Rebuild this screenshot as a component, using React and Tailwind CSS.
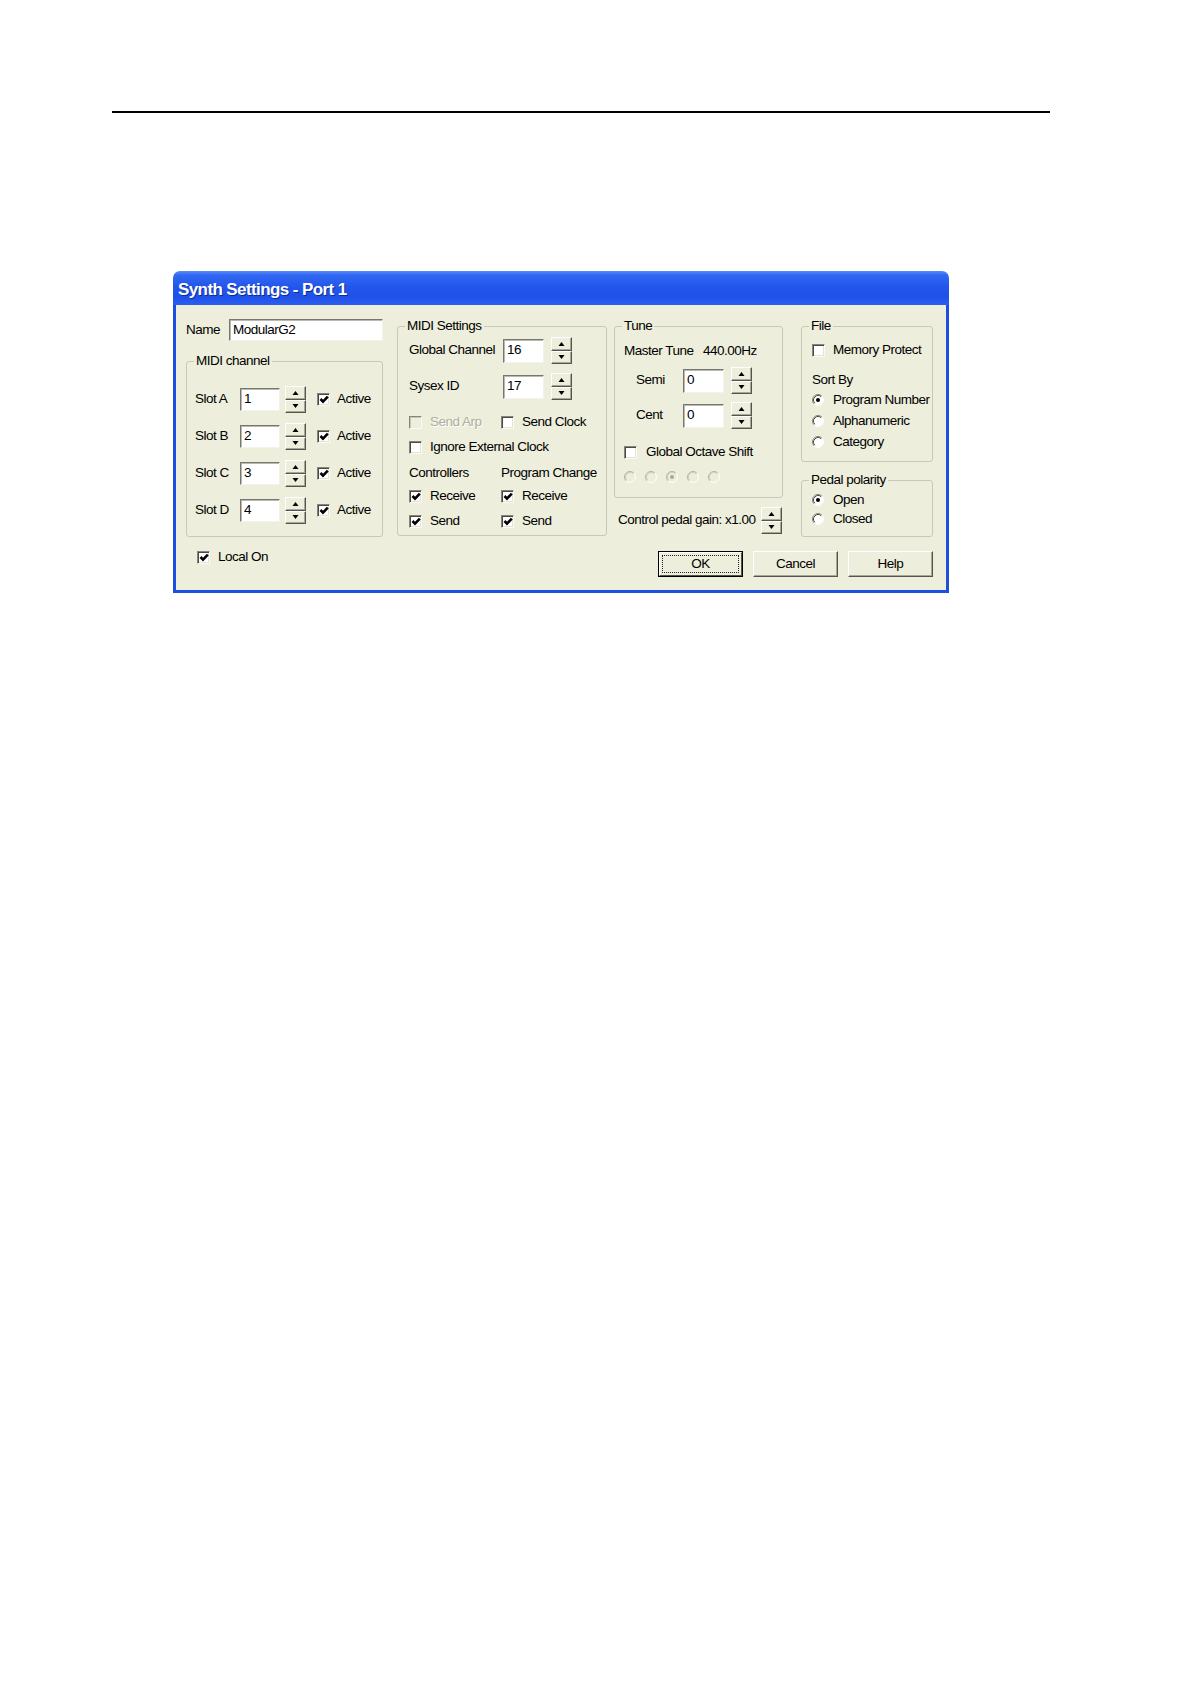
import React from "react";

const FONT = "font-['Liberation_Sans',Arial,sans-serif]";

function Check({ checked = false, disabled = false }) {
  return (
    <span
      className={`relative block w-[13px] h-[13px] shrink-0 border border-t-[#85857b] border-l-[#85857b] border-b-[#fbfbf5] border-r-[#fbfbf5] ${
        disabled
          ? "bg-[#edeedb] shadow-[inset_1px_1px_0_#c9c8b6]"
          : "bg-white shadow-[inset_1px_1px_0_#4a4a44,inset_-1px_-1px_0_#e4e3d4]"
      }`}
    >
      {checked && (
        <svg className="absolute left-[1px] top-[1px]" width="10" height="10" viewBox="0 0 10 10">
          <path d="M1.5 4 L4 6.6 L8.8 1.6" stroke="#000" strokeWidth="2.6" fill="none" />
        </svg>
      )}
    </span>
  );
}

function Radio({ checked = false, disabled = false }) {
  const fill = disabled ? "#edeedb" : "#ffffff";
  return (
    <svg width="12" height="12" viewBox="0 0 12 12" className="block shrink-0">
      <circle cx="6" cy="6" r="5" fill={fill} />
      <path d="M9.89 2.11 A5.5 5.5 0 0 0 2.11 9.89" stroke={disabled ? "#b4b3a3" : "#85857b"} fill="none" />
      <path d="M9.18 2.82 A4.5 4.5 0 0 0 2.82 9.18" stroke={disabled ? "#cfcebe" : "#4a4a44"} fill="none" />
      <path d="M9.89 2.11 A5.5 5.5 0 0 1 2.11 9.89" stroke="#ffffff" fill="none" />
      {checked && <circle cx="6" cy="6" r="2" fill={disabled ? "#a8a797" : "#000"} />}
    </svg>
  );
}

function Arrow({ up }) {
  return (
    <svg width="7" height="4" viewBox="0 0 7 4" className="block">
      <path d={up ? "M3.5 0 L6.5 4 L0.5 4 Z" : "M0.5 0 L6.5 0 L3.5 4 Z"} fill="#000" />
    </svg>
  );
}

function SpinHalf({ up }) {
  return (
    <div className="flex-1 flex items-center justify-center bg-[#edeedb] border border-t-[#ffffff] border-l-[#ffffff] border-b-[#55554d] border-r-[#55554d] shadow-[inset_-1px_-1px_0_#a9a898]">
      <Arrow up={up} />
    </div>
  );
}

function Spin() {
  return (
    <div className="flex flex-col w-[21px] h-[27px] shrink-0">
      <SpinHalf up />
      <SpinHalf />
    </div>
  );
}

function Field({ value, w, h }) {
  return (
    <div
      className={`${w} ${h} shrink-0 bg-white border border-t-[#77776f] border-l-[#77776f] border-b-[#f3f3ea] border-r-[#f3f3ea] shadow-[inset_1px_1px_0_#b9b9ae] pl-[3px] flex items-center`}
    >
      {value}
    </div>
  );
}

function Group({ legend, className, bodyClass, children }) {
  return (
    <fieldset className={`min-w-0 border border-[#c9c9b8] rounded-[3px] ${className}`}>
      <legend className="ml-[7px] px-[2px] leading-[16px] h-[16px] whitespace-nowrap">{legend}</legend>
      <div className={`flex flex-col ${bodyClass}`}>{children}</div>
    </fieldset>
  );
}

function CheckRow({ label, checked, disabled, className = "" }) {
  return (
    <div className={`h-[18px] flex items-center ${className}`}>
      <Check checked={checked} disabled={disabled} />
      <span
        className={`ml-[8px] whitespace-nowrap ${
          disabled ? "text-[#aeae9e] [text-shadow:1px_1px_0_#ffffff]" : ""
        }`}
      >
        {label}
      </span>
    </div>
  );
}

function RadioRow({ label, checked, className = "" }) {
  return (
    <div className={`h-[18px] flex items-center ${className}`}>
      <Radio checked={checked} />
      <span className="ml-[9px] whitespace-nowrap">{label}</span>
    </div>
  );
}

function SlotRow({ slot, value }) {
  return (
    <div className="h-[27px] flex items-center">
      <span className="w-[45px] whitespace-nowrap">{slot}</span>
      <Field value={value} w="w-[40px]" h="h-[23px]" />
      <div className="ml-[5px]">
        <Spin />
      </div>
      <div className="ml-[11px] flex items-center">
        <Check checked />
        <span className="ml-[7px]">Active</span>
      </div>
    </div>
  );
}

function SpinField({ label, value, labelW }) {
  return (
    <div className="h-[27px] flex items-center">
      <span className={`${labelW} whitespace-nowrap`}>{label}</span>
      <Field value={value} w="w-[41px]" h="h-[24px]" />
      <div className="ml-[7px]">
        <Spin />
      </div>
    </div>
  );
}

function Btn({ children, def = false }) {
  if (def) {
    return (
      <div className="w-[85px] h-[26px] border border-black bg-[#edeedb]">
        <div className="w-full h-full border border-t-white border-l-white border-b-[#55554d] border-r-[#55554d] p-[2px]">
          <div className="w-full h-full border border-dotted border-[#222] flex items-center justify-center">
            {children}
          </div>
        </div>
      </div>
    );
  }
  return (
    <div className="w-[85px] h-[26px] bg-[#edeedb] border border-t-white border-l-white border-b-[#55554d] border-r-[#55554d] shadow-[inset_-1px_-1px_0_#a9a898] flex items-center justify-center">
      {children}
    </div>
  );
}

export default function App() {
  return (
    <div className={`w-[1190px] min-h-[1684px] bg-white pt-[111px] ${FONT} text-[13.5px] tracking-[-0.5px] text-black`}>
      <div className="ml-[112px] w-[938px] h-[2px] bg-black" />
      <div className="ml-[173px] mt-[158px] w-[776px]">
        {/* Title bar */}
        <div className="h-[34px] rounded-t-[7px] bg-[linear-gradient(180deg,#5a8cf8_0%,#3168f2_12%,#2356ec_45%,#1f50e8_75%,#2a5ef0_100%)] pl-[5px] pt-[3px] flex items-center">
          <span className="font-bold text-[17px] tracking-[-0.6px] text-white [text-shadow:1px_1px_0_#0a2a9a]">
            Synth Settings - Port 1
          </span>
        </div>
        {/* Body */}
        <div className="h-[288px] bg-[#edeedb] border-x-[3px] border-b-[3px] border-[#1f4de0] pl-[10px] pr-[13px] flex flex-col">
          <div className="flex items-start">
            {/* Left column */}
            <div className="w-[197px] shrink-0 flex flex-col">
              <div className="mt-[14px] h-[22px] flex items-center">
                <span className="w-[43px]">Name</span>
                <Field value="ModularG2" w="w-[154px]" h="h-[22px]" />
              </div>
              <Group legend="MIDI channel" className="mt-[12px] h-[184px]" bodyClass="pl-[8px] pt-[17px] gap-[10px]">
                <SlotRow slot="Slot A" value="1" />
                <SlotRow slot="Slot B" value="2" />
                <SlotRow slot="Slot C" value="3" />
                <SlotRow slot="Slot D" value="4" />
              </Group>
            </div>

            {/* MIDI Settings */}
            <div className="ml-[14px] w-[210px] shrink-0">
              <Group legend="MIDI Settings" className="mt-[13px] h-[218px]" bodyClass="pl-[11px]">
                <div className="mt-[3px]">
                  <SpinField label="Global Channel" value="16" labelW="w-[94px]" />
                </div>
                <div className="mt-[9px]">
                  <SpinField label="Sysex ID" value="17" labelW="w-[94px]" />
                </div>
                <div className="mt-[13px] flex">
                  <div className="w-[92px]">
                    <CheckRow label="Send Arp" disabled />
                  </div>
                  <CheckRow label="Send Clock" />
                </div>
                <CheckRow label="Ignore External Clock" className="mt-[7px]" />
                <div className="mt-[8px] h-[18px] flex items-center whitespace-nowrap">
                  <span className="w-[92px]">Controllers</span>
                  <span>Program Change</span>
                </div>
                <div className="mt-[5px] flex">
                  <div className="w-[92px]">
                    <CheckRow label="Receive" checked />
                  </div>
                  <CheckRow label="Receive" checked />
                </div>
                <div className="mt-[7px] flex">
                  <div className="w-[92px]">
                    <CheckRow label="Send" checked />
                  </div>
                  <CheckRow label="Send" checked />
                </div>
              </Group>
            </div>

            {/* Tune */}
            <div className="ml-[7px] w-[169px] shrink-0 flex flex-col">
              <Group legend="Tune" className="mt-[13px] h-[180px]" bodyClass="pl-[9px]">
                <div className="mt-[8px] h-[18px] flex items-center whitespace-nowrap">
                  <span className="w-[79px]">Master Tune</span>
                  <span>440.00Hz</span>
                </div>
                <div className="mt-[7px] pl-[12px]">
                  <SpinField label="Semi" value="0" labelW="w-[47px]" />
                </div>
                <div className="mt-[8px] pl-[12px]">
                  <SpinField label="Cent" value="0" labelW="w-[47px]" />
                </div>
                <div className="mt-[14px] h-[18px] flex items-center">
                  <Check />
                  <span className="ml-[9px] whitespace-nowrap">Global Octave Shift</span>
                </div>
                <div className="mt-[7px] h-[18px] flex items-center gap-[9px]">
                  <Radio disabled />
                  <Radio disabled />
                  <Radio disabled checked />
                  <Radio disabled />
                  <Radio disabled />
                </div>
              </Group>
              <div className="mt-[9px] h-[27px] pl-[4px] pr-[1px] flex items-center justify-between">
                <span className="whitespace-nowrap">Control pedal gain: x1.00</span>
                <Spin />
              </div>
            </div>

            {/* File */}
            <div className="ml-[18px] w-[132px] shrink-0 flex flex-col">
              <Group legend="File" className="mt-[13px] h-[144px]" bodyClass="pl-[10px]">
                <CheckRow label="Memory Protect" className="mt-[7px]" />
                <div className="mt-[12px] h-[18px] flex items-center">Sort By</div>
                <RadioRow label="Program Number" checked className="mt-[2px]" />
                <RadioRow label="Alphanumeric" className="mt-[3px]" />
                <RadioRow label="Category" className="mt-[3px]" />
              </Group>
              <Group legend="Pedal polarity" className="mt-[10px] h-[65px]" bodyClass="pl-[10px]">
                <RadioRow label="Open" checked className="mt-[3px]" />
                <RadioRow label="Closed" className="mt-[1px]" />
              </Group>
            </div>
          </div>

          {/* Bottom row */}
          <div className="flex items-start">
            <div className="ml-[11px] mt-[11px]">
              <CheckRow label="Local On" checked />
            </div>
            <div className="ml-auto mt-[14px] flex gap-[10px]">
              <Btn def>OK</Btn>
              <Btn>Cancel</Btn>
              <Btn>Help</Btn>
            </div>
          </div>
        </div>
      </div>
    </div>
  );
}
